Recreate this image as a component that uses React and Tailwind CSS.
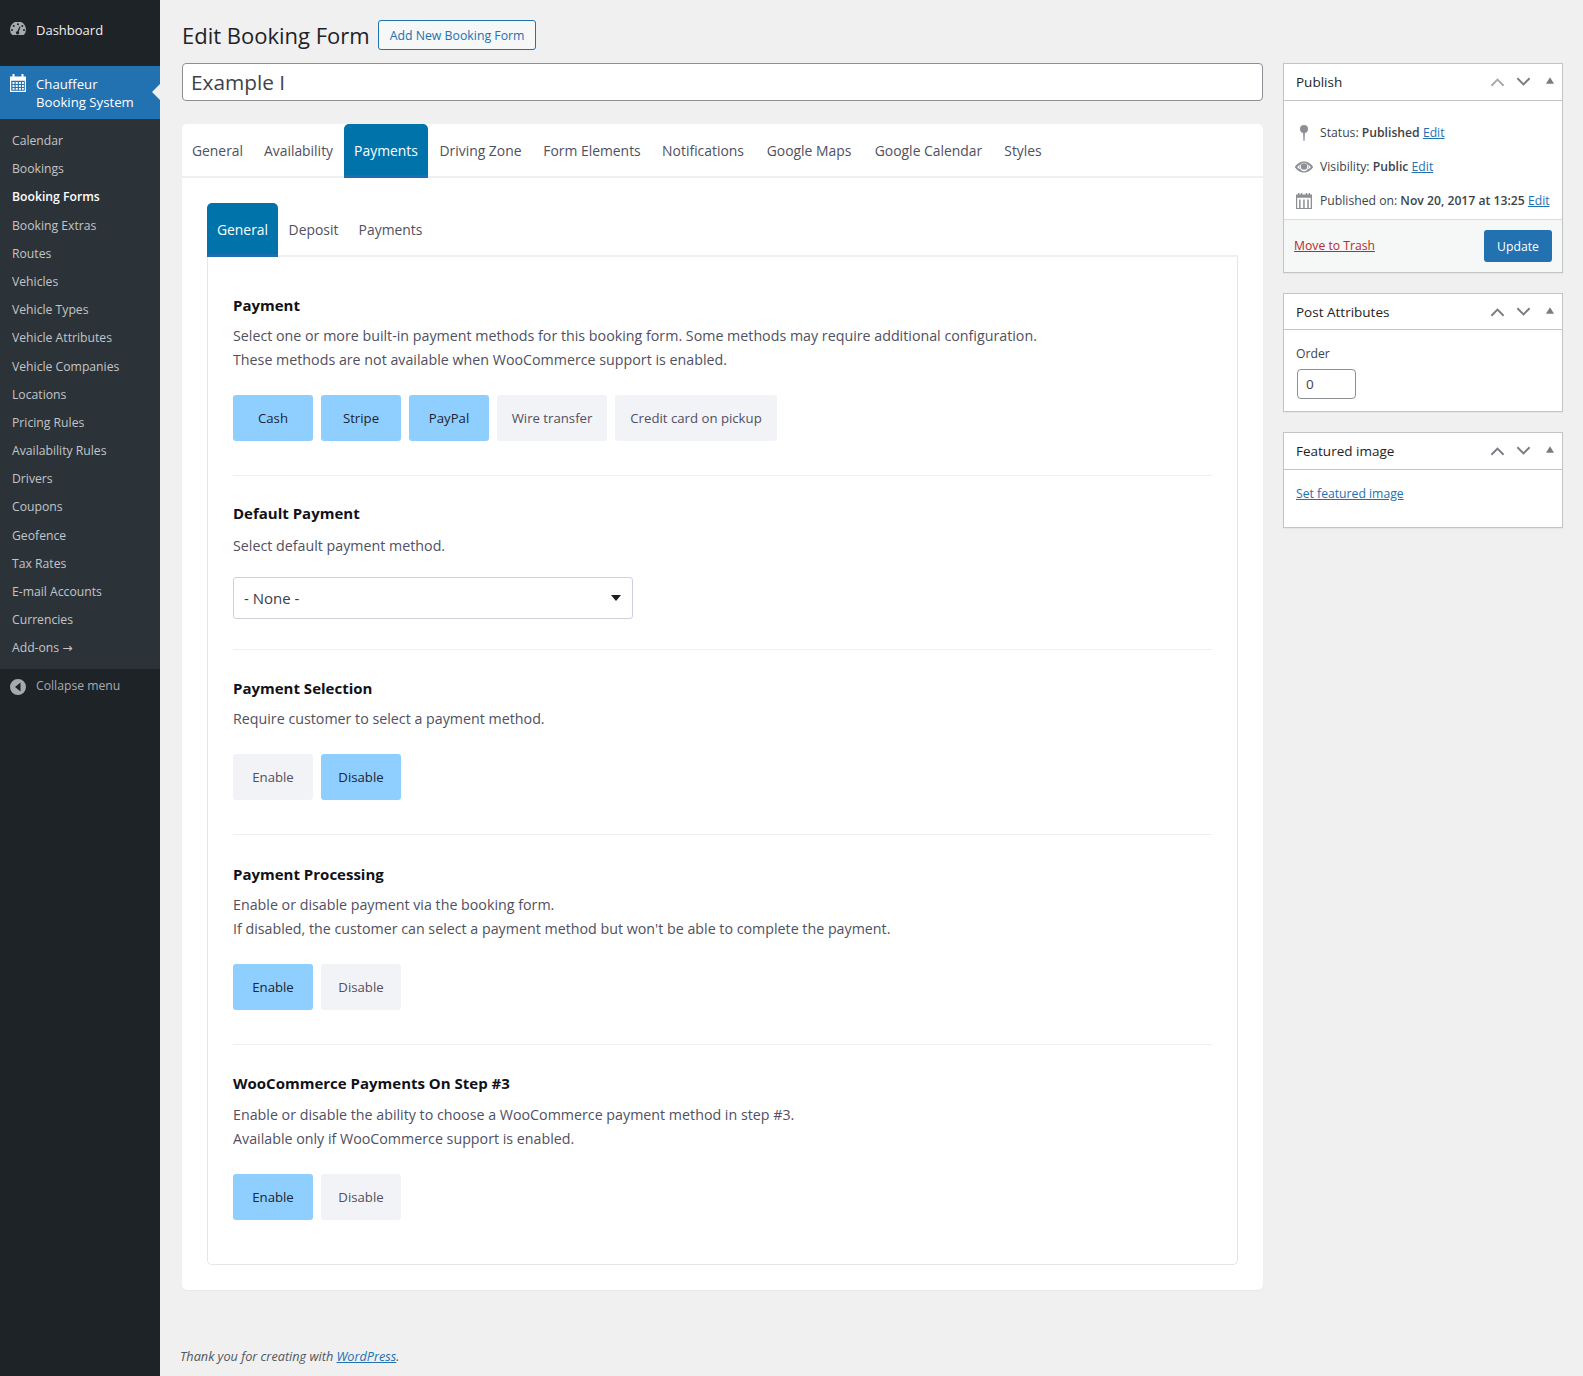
import React from "react";

const subMenu = [
  "Calendar",
  "Bookings",
  "Booking Forms",
  "Booking Extras",
  "Routes",
  "Vehicles",
  "Vehicle Types",
  "Vehicle Attributes",
  "Vehicle Companies",
  "Locations",
  "Pricing Rules",
  "Availability Rules",
  "Drivers",
  "Coupons",
  "Geofence",
  "Tax Rates",
  "E-mail Accounts",
  "Currencies",
];

const mainTabs = [
  { label: "General", width: "w-[71px]" },
  { label: "Availability", width: "w-[91px]" },
  { label: "Payments", width: "w-[84px]", active: true },
  { label: "Driving Zone", width: "w-[105px]" },
  { label: "Form Elements", width: "w-[118px]" },
  { label: "Notifications", width: "w-[104px]" },
  { label: "Google Maps", width: "w-[108px]" },
  { label: "Google Calendar", width: "w-[131px]" },
  { label: "Styles", width: "w-[58px]" },
];

const subTabs = [
  { label: "General", width: "w-[71px]", active: true },
  { label: "Deposit", width: "w-[71px]" },
  { label: "Payments", width: "w-[83px]" },
];

function CalendarIcon({ className }) {
  return (
    <svg viewBox="0 0 16 18" className={className} fill="currentColor">
      <path
        fillRule="evenodd"
        d="M0 2.500h2.500V0h2v2.500h7V0h2v2.500H16V18H0V2.500zm1.200 4.300v10h13.600v-10H1.200zM2.500 8h2v2h-2zM5.700 8h2v2h-2zM8.900 8h2v2h-2zM12 8h1.800v2H12zM2.500 11h2v2h-2zM5.700 11h2v2h-2zM8.900 11h2v2h-2zM12 11h1.800v2H12zM2.500 14h2v1.800h-2zM5.700 14h2v1.800h-2zM8.900 14h2v1.800h-2zM12 14h1.800v1.800H12z"
      />
    </svg>
  );
}

function DashboardIcon({ className }) {
  return (
    <svg viewBox="0 0 16 13" className={className} fill="currentColor">
      <path
        fillRule="evenodd"
        d="M2.300 13A8 8 0 1 1 13.700 13H2.300zM8 1.200a1 1 0 1 0 0 2 1 1 0 0 0 0-2zM3.700 3a1 1 0 1 0 0 2 1 1 0 0 0 0-2zM12.300 3a1 1 0 1 0 0 2 1 1 0 0 0 0-2zM2 7a1 1 0 1 0 0 2 1 1 0 0 0 0-2zM14 7a1 1 0 1 0 0 2 1 1 0 0 0 0-2zM9.500 4.500L7.300 9.200a1.600 1.600 0 1 0 1.500.6l1.700-5z"
      />
    </svg>
  );
}

function PinIcon() {
  return (
    <svg viewBox="0 0 20 20" className="w-5 h-5 shrink-0 text-[#8c8f94]" fill="currentColor">
      <circle cx="10" cy="6" r="4" />
      <path d="M9 9h2l-.5 9h-1z" />
    </svg>
  );
}

function EyeIcon() {
  return (
    <svg viewBox="0 0 20 20" className="w-5 h-5 shrink-0 text-[#8c8f94]" fill="currentColor">
      <path
        fillRule="evenodd"
        d="M10 4.500c4.200 0 7.500 2.700 9.200 5.500-1.700 2.800-5 5.500-9.200 5.500S2.500 12.800.8 10C2.500 7.200 5.800 4.500 10 4.500zm0 1.300a4.200 4.200 0 1 0 0 8.400 4.200 4.200 0 0 0 0-8.400zM3.200 10c.8 1 1.700 1.900 2.700 2.600a5.500 5.500 0 0 1 0-5.200C4.900 8.100 4 9 3.200 10zm13.600 0c-.8-1-1.700-1.900-2.700-2.600a5.500 5.500 0 0 1 0 5.200c1-.7 1.900-1.600 2.700-2.600z"
      />
      <circle cx="10" cy="9.500" r="3.200" />
    </svg>
  );
}

function CalendarOutlineIcon() {
  return (
    <svg viewBox="0 0 20 20" className="w-5 h-5 shrink-0 text-[#8c8f94]" fill="currentColor">
      <path
        fillRule="evenodd"
        d="M2 3.500h2V2h1.500v1.500h1.300V2h1.500v1.500h3.400V2h1.500v1.500h1.300V2h1.500v1.500h2V18H2V3.500zm1.200 3.300V17h1.900V8.500h1.500V17h2.600V8.500h1.500V17h2.600V8.500h1.500V17h1.900V6.800H3.200z"
      />
    </svg>
  );
}

function BoxHandles({ upMuted }) {
  return (
    <div className="flex items-center ml-auto">
      <svg viewBox="0 0 16 10" className={`w-[15px] h-[10px] ${upMuted ? "text-[#a7aaad]" : "text-[#787c82]"}`} fill="none" stroke="currentColor" strokeWidth="2">
        <path d="M1.500 9L8 2.500 14.500 9" />
      </svg>
      <svg viewBox="0 0 16 10" className="w-[15px] h-[10px] ml-[11px] text-[#787c82]" fill="none" stroke="currentColor" strokeWidth="2">
        <path d="M1.500 1L8 7.500 14.500 1" />
      </svg>
      <svg viewBox="0 0 10 8" className="w-2 h-[7px] ml-[15px] mb-[3px] text-[#787c82]" fill="currentColor">
        <path d="M5 0l5 8H0z" />
      </svg>
    </div>
  );
}

function MetaBox({ title, upMuted, headerClass = "h-9 pt-[1px]", children }) {
  return (
    <div className="bg-white border border-[#c3c4c7] shadow-[0_1px_1px_rgba(0,0,0,0.04)]">
      <div className={`${headerClass} flex items-center pl-[12px] pr-2 border-b border-[#c3c4c7] text-[13.500px] text-[#1d2327]`}>
        <span>{title}</span>
        <BoxHandles upMuted={upMuted} />
      </div>
      {children}
    </div>
  );
}

function TabRow({ tabs }) {
  return (
    <div className="flex h-[54px] border-b-2 border-[#eeeff2]">
      {tabs.map((t) => (
        <div
          key={t.label}
          className={`h-[54px] pt-[4px] flex items-center justify-center text-[13.900px] rounded-t-[5px] border-b-[3px] ${t.width} ${
            t.active ? "bg-[#0073aa] border-[#1f6dae] text-white" : "border-transparent text-[#50505f]"
          }`}
        >
          {t.label}
        </div>
      ))}
    </div>
  );
}

function OptionButton({ label, active, width }) {
  return (
    <div
      className={`h-[46px] pt-[2px] flex items-center justify-center rounded-[3px] text-[13.200px] ${width} ${
        active ? "bg-[#8ecfff] text-[#1c2430]" : "bg-[#f2f3f7] text-[#50505f]"
      }`}
    >
      {label}
    </div>
  );
}

function Section({ title, lines, topClass = "pt-[28px]", descClass = "mt-[9px]", bodyClass = "mt-[23px]", bottomClass = "pb-[34px] border-b border-[#eeeff2]", children }) {
  return (
    <div className={`${topClass} ${bottomClass}`}>
      <div className="h-5 leading-5 text-[15px] font-bold text-[#111118]">{title}</div>
      <div className={`${descClass} text-[14.250px] leading-6 text-[#50505f]`}>
        {lines.map((l) => (
          <div key={l}>{l}</div>
        ))}
      </div>
      <div className={bodyClass}>{children}</div>
    </div>
  );
}

export default function App() {
  return (
    <div className="flex min-h-[1376px] bg-[#f0f0f1] font-['Open_Sans',sans-serif] text-[12.200px] text-[#3c434a]">
      {/* admin sidebar */}
      <div className="w-40 shrink-0 bg-[#1d2327]">
        <div className="h-[66px] flex items-start pt-[22px] pl-[10px] text-[13px] leading-[16px] text-[#f0f0f1]">
          <DashboardIcon className="w-4 h-[13px] text-[#a7aaad]" />
          <span className="ml-[10px]">Dashboard</span>
        </div>
        <div className="relative h-[53px] bg-[#2271b1] flex items-start pt-[9px] pl-[10px] text-[13.200px] leading-[18px] text-white">
          <CalendarIcon className="w-4 h-[18px] -mt-[1px]" />
          <span className="ml-[10px]">
            Chauffeur
            <br />
            Booking System
          </span>
          <div className="absolute right-0 top-[18px] w-0 h-0 border-y-[8px] border-y-transparent border-r-[8px] border-r-[#f0f0f1]" />
        </div>
        <div className="bg-[#2c3338] pt-[8px] pb-[6px]">
          {subMenu.map((item) => (
            <div
              key={item}
              className={`h-[28.200px] leading-[28px] pl-3 ${
                item === "Booking Forms" ? "font-semibold text-white" : "text-[#c3c4c7]"
              }`}
            >
              {item}
            </div>
          ))}
          <div className="h-[28.200px] leading-[28px] pl-3 text-[#c3c4c7]">
            Add-ons <span className="font-['DejaVu_Sans',sans-serif]">→</span>
          </div>
        </div>
        <div className="h-[36px] flex items-center pl-[10px] text-[#a7aaad]">
          <svg viewBox="0 0 16 16" className="w-4 h-4 text-[#a7aaad]" fill="currentColor">
            <path fillRule="evenodd" d="M8 0a8 8 0 1 1 0 16A8 8 0 0 1 8 0zm2.500 3.500L5 8l5.500 4.500v-9z" />
          </svg>
          <span className="ml-[10px]">Collapse menu</span>
        </div>
      </div>

      {/* page body */}
      <div className="flex-1 flex flex-col min-w-0 pl-[22px] pr-5">
        <div className="flex items-center h-[63px] pt-[7px]">
          <h1 className="text-[22px] leading-[29px] text-[#1d2327]">Edit Booking Form</h1>
          <div className="ml-2 h-[30px] px-[11px] pt-[2px] flex items-center rounded-[3px] border border-[#2271b1] bg-[#f6f7f7] text-[12.300px] text-[#2271b1]">
            Add New Booking Form
          </div>
        </div>

        <div className="flex gap-5">
          <div className="w-[1081px] shrink-0">
            <input
              readOnly
              value="Example I"
              className="w-full h-[38px] rounded-[4px] border border-[#8c8f94] bg-white px-[8px] text-[20.800px] text-[#3c434a] outline-none"
            />

            <div className="mt-[23px] bg-white rounded-[5px] shadow-[0_1px_1px_rgba(0,0,0,0.04)]">
              <TabRow tabs={mainTabs} />

              <div className="p-[25px]">
                <TabRow tabs={subTabs} />

                <div className="border border-t-0 border-[#e4e5e9] rounded-b-[5px] px-[25px]">
                  <Section
                    topClass="pt-[38px]"
                    title="Payment"
                    lines={[
                      "Select one or more built-in payment methods for this booking form. Some methods may require additional configuration.",
                      "These methods are not available when WooCommerce support is enabled.",
                    ]}
                  >
                    <div className="flex gap-2">
                      <OptionButton label="Cash" active width="w-20" />
                      <OptionButton label="Stripe" active width="w-20" />
                      <OptionButton label="PayPal" active width="w-20" />
                      <OptionButton label="Wire transfer" width="w-[110px]" />
                      <OptionButton label="Credit card on pickup" width="w-[162px]" />
                    </div>
                  </Section>

                  <Section
                    topClass="pt-[27px]"
                    descClass="mt-[11px]"
                    bodyClass="mt-[19px]"
                    bottomClass="pb-[30px] border-b border-[#eeeff2]"
                    title="Default Payment"
                    lines={["Select default payment method."]}
                  >
                    <div className="w-[400px] h-[42px] flex items-center justify-between pl-[10px] pr-[11px] bg-white border border-[#d0d1de] rounded-[3px] text-[15px] text-[#3c3c48]">
                      <span>- None -</span>
                      <svg viewBox="0 0 10 6" className="w-[10px] h-[6px] text-[#1d1d26]" fill="currentColor">
                        <path d="M0 0h10L5 6z" />
                      </svg>
                    </div>
                  </Section>

                  <Section title="Payment Selection" lines={["Require customer to select a payment method."]}>
                    <div className="flex gap-2">
                      <OptionButton label="Enable" width="w-20" />
                      <OptionButton label="Disable" active width="w-20" />
                    </div>
                  </Section>

                  <Section
                    topClass="pt-[29px]"
                    title="Payment Processing"
                    lines={[
                      "Enable or disable payment via the booking form.",
                      "If disabled, the customer can select a payment method but won't be able to complete the payment.",
                    ]}
                  >
                    <div className="flex gap-2">
                      <OptionButton label="Enable" active width="w-20" />
                      <OptionButton label="Disable" width="w-20" />
                    </div>
                  </Section>

                  <Section
                    descClass="mt-[10px]"
                    bottomClass="pb-[44px]"
                    title="WooCommerce Payments On Step #3"
                    lines={[
                      "Enable or disable the ability to choose a WooCommerce payment method in step #3.",
                      "Available only if WooCommerce support is enabled.",
                    ]}
                  >
                    <div className="flex gap-2">
                      <OptionButton label="Enable" active width="w-20" />
                      <OptionButton label="Disable" width="w-20" />
                    </div>
                  </Section>
                </div>
              </div>
            </div>
          </div>

          {/* right column */}
          <div className="w-[280px] shrink-0 flex flex-col gap-5">
            <MetaBox title="Publish" upMuted headerClass="h-[37px]">
              <div className="pt-[15px] pb-[1px] pl-[10px] pr-3 flex flex-col">
                <div className="h-[34px] flex items-center">
                  <PinIcon />
                  <span className="ml-[6px]">
                    Status: <span className="font-semibold">Published</span> <a className="text-[#2271b1] underline">Edit</a>
                  </span>
                </div>
                <div className="h-[34px] flex items-center">
                  <EyeIcon />
                  <span className="ml-[6px]">
                    Visibility: <span className="font-semibold">Public</span> <a className="text-[#2271b1] underline">Edit</a>
                  </span>
                </div>
                <div className="h-[34px] flex items-center">
                  <CalendarOutlineIcon />
                  <span className="ml-[6px] whitespace-nowrap">
                    Published on: <span className="font-semibold">Nov 20, 2017 at 13:25</span> <a className="text-[#2271b1] underline">Edit</a>
                  </span>
                </div>
              </div>
              <div className="h-[53px] flex items-center justify-between px-[10px] bg-[#f6f7f7] border-t border-[#dcdcde]">
                <a className="text-[#b32d2e] underline">Move to Trash</a>
                <div className="w-[68px] h-8 pt-[2px] flex items-center justify-center rounded-[3px] bg-[#2271b1] text-white">Update</div>
              </div>
            </MetaBox>

            <MetaBox title="Post Attributes">
              <div className="h-[81px] pl-[13px] pt-[15px]">
                <div className="-ml-[1px] leading-[18px] text-[#3c434a]">Order</div>
                <input
                  readOnly
                  value="0"
                  className="mt-[6px] w-[59px] h-[30px] rounded-[4px] border border-[#8c8f94] bg-white px-[8px] text-[13.500px] outline-none"
                />
              </div>
            </MetaBox>

            <MetaBox title="Featured image" headerClass="h-[37px]">
              <div className="h-[57px] pl-[12px] pt-[15px]">
                <a className="text-[#2271b1] underline">Set featured image</a>
              </div>
            </MetaBox>
          </div>
        </div>

        <div className="mt-[57px] -ml-[2px] italic text-[12.700px] text-[#50575e]">
          Thank you for creating with <a className="text-[#2271b1] underline">WordPress</a>.
        </div>
      </div>
    </div>
  );
}
